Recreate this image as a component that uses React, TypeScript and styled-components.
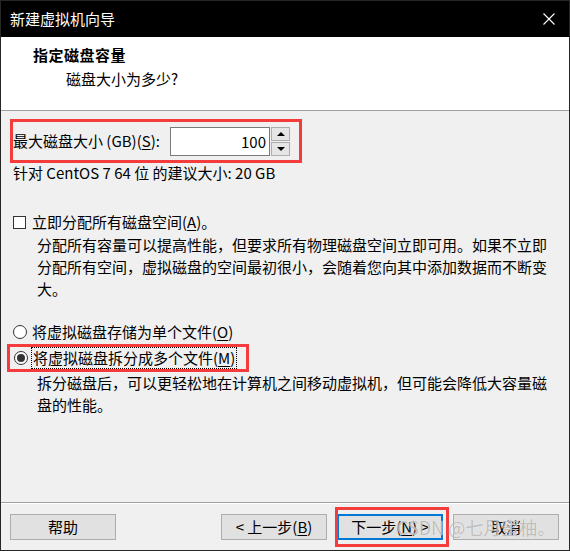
import styled, { createGlobalStyle } from 'styled-components'

const GlobalStyle = createGlobalStyle`
  html, body {
    margin: 0;
    padding: 0;
    background: #f0f0f0;
  }
  body {
    font-family: "Noto Sans CJK SC", "Noto Sans", sans-serif;
    font-size: 15px;
    color: #000;
  }
  * {
    box-sizing: border-box;
  }
`

const HL = '#f53c3c'

const CloseIcon = () => (
  <svg width="12" height="12" viewBox="0 0 12 12">
    <path d="M0.5 0.5 L11.5 11.5 M11.5 0.5 L0.5 11.5" stroke="#fff" strokeWidth="1.1" />
  </svg>
)

const App = () => (
  <>
    <GlobalStyle />
    <Window>
      <TitleBar>
        <span>新建虚拟机向导</span>
        <CloseIcon />
      </TitleBar>
      <Header>
        <Heading>指定磁盘容量</Heading>
        <SubHeading>磁盘大小为多少?</SubHeading>
      </Header>
      <Body>
        <SizeBox>
          <span>
            最大磁盘大小 (GB)(<Key>S</Key>):
          </span>
          <Field>
            <NumberBox>100</NumberBox>
            <Spin>
              <SpinButton>
                <Arrow $up />
              </SpinButton>
              <SpinButton>
                <Arrow />
              </SpinButton>
            </Spin>
          </Field>
        </SizeBox>
        <Hint>针对 CentOS 7 64 位 的建议大小: 20 GB</Hint>
        <CheckRow>
          <CheckBox />
          <span>
            立即分配所有磁盘空间(<Key>A</Key>)。
          </span>
        </CheckRow>
        <Para>
          分配所有容量可以提高性能，但要求所有物理磁盘空间立即可用。如果不立即分配所有空间，虚拟磁盘的空间最初很小，会随着您向其中添加数据而不断变大。
        </Para>
        <RadioRow>
          <Radio />
          <span>
            将虚拟磁盘存储为单个文件(<Key>O</Key>)
          </span>
        </RadioRow>
        <RadioBox>
          <Radio $checked />
          <FocusText>
            将虚拟磁盘拆分成多个文件(<Key>M</Key>)
          </FocusText>
        </RadioBox>
        <Para $tight>
          拆分磁盘后，可以更轻松地在计算机之间移动虚拟机，但可能会降低大容量磁盘的性能。
        </Para>
      </Body>
      <Footer>
        <Button>帮助</Button>
        <ButtonGroup>
          <Button>
            &lt; 上一步(<Key>B</Key>)
          </Button>
          <Marked>
            <Button $default>
              下一步(<Key>N</Key>) &gt;
            </Button>
            <RedFrame />
          </Marked>
          <Button>取消</Button>
        </ButtonGroup>
      </Footer>
      <Watermark>CSDN @七月蜜柚。</Watermark>
    </Window>
  </>
)

const Window = styled.div`
  position: relative;
  width: 570px;
  height: 551px;
  border: 1px solid #262626;
  display: flex;
  flex-direction: column;
  background: #f0f0f0;
  overflow: hidden;
`

const TitleBar = styled.div`
  height: 36px;
  background: #000;
  color: #fff;
  display: flex;
  align-items: center;
  justify-content: space-between;
  padding: 0 14px 0 9px;
  line-height: 20px;
`

const Header = styled.div`
  height: 74px;
  background: #fff;
  border-bottom: 1px solid #a0a0a0;
  padding: 8px 0 0 32px;
`

const Heading = styled.div`
  font-weight: 700;
  line-height: 20px;
  letter-spacing: 0.5px;
`

const SubHeading = styled.div`
  margin-top: 4px;
  padding-left: 33px;
  line-height: 20px;
`

const Body = styled.div`
  flex: 1;
  display: flex;
  flex-direction: column;
  align-items: flex-start;
  padding-top: 8px;
  line-height: 20px;
`

const Key = styled.span`
  text-decoration: underline;
  text-underline-offset: 2px;
`

const SizeBox = styled.div`
  margin-left: 9px;
  width: 292px;
  height: 44px;
  border: 3px solid ${HL};
  display: flex;
  align-items: center;
  justify-content: space-between;
  padding-right: 9px;
`

const Field = styled.div`
  display: flex;
  gap: 1px;
`

const NumberBox = styled.div`
  width: 100px;
  height: 29px;
  background: #fff;
  border: 1px solid #7a7a7a;
  text-align: right;
  padding-right: 3px;
  line-height: 27px;
`

const Spin = styled.div`
  width: 19px;
  height: 29px;
  display: flex;
  flex-direction: column;
  gap: 1px;
`

const SpinButton = styled.div`
  flex: 1;
  background: #e5e5e5;
  border: 1px solid #adadad;
  display: flex;
  align-items: center;
  justify-content: center;
`

const Arrow = styled.div<{ $up?: boolean }>`
  width: 0;
  height: 0;
  border-left: 4px solid transparent;
  border-right: 4px solid transparent;
  ${(p) => (p.$up ? 'border-bottom: 4px solid #000;' : 'border-top: 4px solid #000;')}
`

const Hint = styled.div`
  margin-left: 12px;
  height: 20px;
`

const CheckRow = styled.div`
  margin: 29px 0 0 12px;
  height: 20px;
  display: flex;
  align-items: center;
  gap: 6px;
`

const CheckBox = styled.div`
  width: 13px;
  height: 13px;
  border: 1px solid #333;
  background: #fff;
`

const Para = styled.div<{ $tight?: boolean }>`
  margin: ${(p) => (p.$tight ? '0' : '2px')} 0 0 36px;
  width: 516px;
  line-height: 22px;
`

const RadioRow = styled.div`
  margin: 22px 0 0 12px;
  height: 20px;
  display: flex;
  align-items: center;
  gap: 5px;
`

const Radio = styled.div<{ $checked?: boolean }>`
  width: 14px;
  height: 14px;
  border-radius: 50%;
  border: 1px solid #333;
  background: #fff;
  display: flex;
  align-items: center;
  justify-content: center;

  &::after {
    content: '';
    width: 8px;
    height: 8px;
    border-radius: 50%;
    background: ${(p) => (p.$checked ? '#333' : 'transparent')};
  }
`

const RadioBox = styled.div`
  margin: 2px 0 0 6px;
  width: 242px;
  height: 28px;
  border: 3px solid ${HL};
  display: flex;
  align-items: center;
  padding-left: 4px;
`

const FocusText = styled.span`
  margin-left: 3px;
  padding: 0 1px;
  border: 1px dotted #000;
  line-height: 20px;
`

const Footer = styled.div`
  height: 48px;
  border-top: 1px solid #a0a0a0;
  box-shadow: inset 0 1px #fff;
  display: flex;
  justify-content: space-between;
  align-items: flex-start;
  padding: 11px 10px 0 9px;
`

const ButtonGroup = styled.div`
  display: flex;
  gap: 10px;
`

const Button = styled.div<{ $default?: boolean }>`
  width: 106px;
  height: 26px;
  background: #e1e1e1;
  border: ${(p) => (p.$default ? '2px solid #0078d7' : '1px solid #adadad')};
  display: flex;
  align-items: center;
  justify-content: center;
  line-height: 20px;
`

const Marked = styled.div`
  position: relative;
`

const RedFrame = styled.div`
  position: absolute;
  top: -7px;
  left: -2px;
  right: -6px;
  bottom: -7px;
  border: 3px solid ${HL};
`

const Watermark = styled.div`
  position: absolute;
  left: 396px;
  top: 513px;
  font-size: 18px;
  line-height: 26px;
  color: rgba(150, 150, 150, 0.6);
  text-shadow: 0 0 1px rgba(255, 255, 255, 0.9);
  white-space: nowrap;
`

export default App
